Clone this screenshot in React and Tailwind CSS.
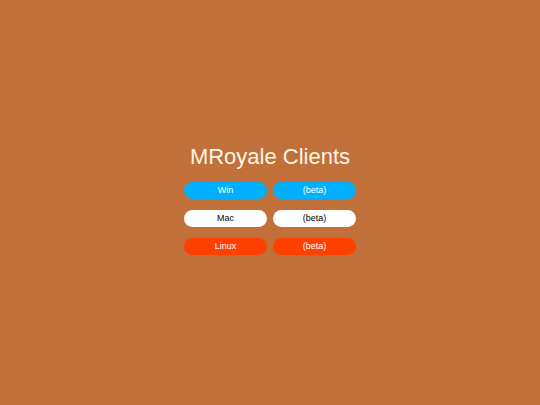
export default function App() {
  const rows = [
    { name: 'Win', cls: 'bg-[#00b0ff] text-white' },
    { name: 'Mac', cls: 'bg-white text-black' },
    { name: 'Linux', cls: 'bg-[#ff4000] text-white' },
  ];
  return (
    <div className="w-[540px] h-[405px] bg-[#c07038] flex flex-col items-center justify-center pb-[6px] font-['Liberation_Sans',Arial,sans-serif]">
      <h1 className="text-[22px] leading-[26px] text-[#fff5e8] mb-[12px]">MRoyale Clients</h1>
      <div className="flex flex-col gap-[11px]">
        {rows.map(r => (
          <div key={r.name} className="flex gap-[6px]">
            <button className={`w-[83px] h-[17px] rounded-full text-[9px] ${r.cls}`}>{r.name}</button>
            <button className={`w-[83px] h-[17px] rounded-full text-[9px] ${r.cls}`}>(beta)</button>
          </div>
        ))}
      </div>
    </div>
  );
}
